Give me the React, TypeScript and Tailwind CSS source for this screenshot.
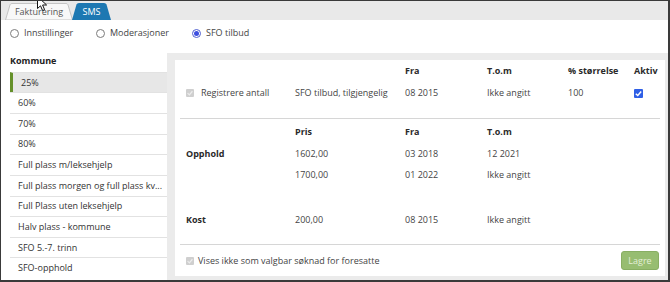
import React from 'react';

const KOMMUNE = [
  '25%',
  '60%',
  '70%',
  '80%',
  'Full plass m/leksehjelp',
  'Full plass morgen og full plass kv...',
  'Full Plass uten leksehjelp',
  'Halv plass - kommune',
  'SFO 5.-7. trinn',
  'SFO-opphold',
];

const Check = ({ active }: { active?: boolean }) => (
  <span
    className={`inline-flex items-center justify-center rounded-[1px] shrink-0 ${
      active ? 'w-[9px] h-[9px] bg-[#2f5fe6]' : 'w-[8px] h-[8px] bg-[#cfcfcf]'
    }`}
  >
    <svg viewBox="0 0 10 10" className="w-full h-full">
      <path d="M2 5.2 L4.2 7.3 L8 2.8" fill="none" stroke={active ? '#fff' : '#ececec'} strokeWidth="1.6" />
    </svg>
  </span>
);

const Radio = ({ label, checked, width }: { label: string; checked?: boolean; width: string }) => (
  <div className={`flex items-center gap-[5px] ${width}`}>
    {checked ? (
      <span className="w-[9px] h-[9px] rounded-full border border-[#5060d0] bg-white flex items-center justify-center">
        <span className="w-[5px] h-[5px] rounded-full bg-[#3d4fe0]"></span>
      </span>
    ) : (
      <span className="w-[9px] h-[9px] rounded-full border border-[#7c7c7c] bg-white"></span>
    )}
    <span className="text-[#444]">{label}</span>
  </div>
);

const Row = ({ h, children, bold }: { h: string; children: React.ReactNode; bold?: boolean }) => (
  <div className={`grid grid-cols-[109px_110px_82px_81px_66px_1fr] items-center pl-[6px] ${h} ${bold ? 'font-bold text-[#2a2a2a]' : 'text-[#444]'}`}>
    {children}
  </div>
);

export default function App() {
  return (
    <div className="relative w-[670px] h-[282px] overflow-hidden bg-white border-l border-t border-r-2 border-b-2 border-[#3a3a3a] flex flex-col font-['Open_Sans',sans-serif] text-[9px] leading-[12px]">
      {/* Tabs */}
      <div className="h-[19px] bg-[#e9e9e9] flex items-end pl-[4px] shrink-0">
        <div className="relative w-[68px] h-[17px] flex items-center justify-center">
          <svg className="absolute inset-0" width="68" height="17" viewBox="0 0 68 17">
            <path d="M0.5 17 L5 1.8 Q5.5 0.5 7 0.5 L61 0.5 Q62.5 0.5 63 1.8 L67.5 17 Z" fill="#f8f8f8" stroke="#c4c4c4" />
          </svg>
          <span className="relative text-[#555] pt-[1px]">Fakturering</span>
        </div>
        <div className="relative w-[39px] h-[17px] flex items-center justify-center -ml-[1px]">
          <svg className="absolute inset-0" width="39" height="17" viewBox="0 0 39 17">
            <path d="M0 17 L4.5 1.6 Q5 0 7 0 L32 0 Q34 0 34.5 1.6 L39 17 Z" fill="#1d78b2" />
          </svg>
          <span className="relative text-white pt-[1px]">SMS</span>
        </div>
      </div>

      {/* Radios */}
      <div className="h-[26px] flex items-center pl-[9px] shrink-0">
        <Radio label="Innstillinger" width="w-[86px]" />
        <Radio label="Moderasjoner" width="w-[96px]" />
        <Radio label="SFO tilbud" checked width="w-[80px]" />
      </div>

      <div className="flex flex-1 min-h-0">
        {/* Kommune list */}
        <div className="w-[157px] ml-[9px] shrink-0 flex flex-col">
          <div className="h-[25.7px] pt-[9px] font-bold text-[#222] shrink-0">Kommune</div>
          {KOMMUNE.map((k, i) => (
            <div
              key={k}
              className={`h-[20.65px] shrink-0 flex items-center border-t border-[#e2e2e2] pl-[8px] pr-[4px] whitespace-nowrap overflow-hidden text-[#333] ${
                i === 0 ? 'bg-[#e7e7e7] border-l-[3px] border-l-[#65902a] pl-[5px]' : ''
              }`}
            >
              {k}
            </div>
          ))}
        </div>

        {/* Detail panel */}
        <div className="flex-1 mt-[7px] bg-[#ebebeb] pl-[8px] pt-[7px] pr-[3px] pb-[4px] flex">
          <div className="flex-1 bg-white px-[5px] flex flex-col">
            <Row h="h-[22px]" bold>
              <span></span>
              <span></span>
              <span>Fra</span>
              <span>T.o.m</span>
              <span>% størrelse</span>
              <span>Aktiv</span>
            </Row>
            <Row h="h-[22px]">
              <span className="flex items-center gap-[7px]">
                <Check />
                <span>Registrere antall</span>
              </span>
              <span>SFO tilbud, tilgjengelig</span>
              <span>08 2015</span>
              <span>Ikke angitt</span>
              <span>100</span>
              <span className="flex"><Check active /></span>
            </Row>
            <div className="h-[15px] border-b border-[#d6d6d6] shrink-0"></div>

            <Row h="h-[25px]" bold>
              <span></span>
              <span>Pris</span>
              <span>Fra</span>
              <span>T.o.m</span>
            </Row>
            <Row h="h-[20px]">
              <span className="font-bold text-[#2a2a2a]">Opphold</span>
              <span>1602,00</span>
              <span>03 2018</span>
              <span>12 2021</span>
            </Row>
            <Row h="h-[22px]">
              <span></span>
              <span>1700,00</span>
              <span>01 2022</span>
              <span>Ikke angitt</span>
            </Row>
            <div className="h-[23px] shrink-0"></div>
            <Row h="h-[22px]">
              <span className="font-bold text-[#2a2a2a]">Kost</span>
              <span>200,00</span>
              <span>08 2015</span>
              <span>Ikke angitt</span>
            </Row>
            <div className="h-[14px] border-b border-[#d6d6d6] shrink-0"></div>

            <div className="flex-1 flex items-center justify-between pl-[6px] pr-[1px]">
              <div className="flex items-center gap-[4px] text-[#444]">
                <Check />
                <span>Vises ikke som valgbar søknad for foresatte</span>
              </div>
              <button className="w-[38px] h-[19px] rounded-[3px] bg-[#97bd71] border border-[#88ae63] text-[#e4efd6]">
                Lagre
              </button>
            </div>
          </div>
        </div>
      </div>

      {/* Mouse pointer */}
      <svg className="absolute left-[36px] top-[-5px]" width="11" height="16" viewBox="0 0 11 16">
        <path d="M0.5 0.5 L0.5 12.5 L3.5 9.8 L5.6 14.6 L7.6 13.7 L5.6 9 L9.6 9 Z" fill="#fff" stroke="#111" strokeWidth="1" />
      </svg>
    </div>
  );
}
